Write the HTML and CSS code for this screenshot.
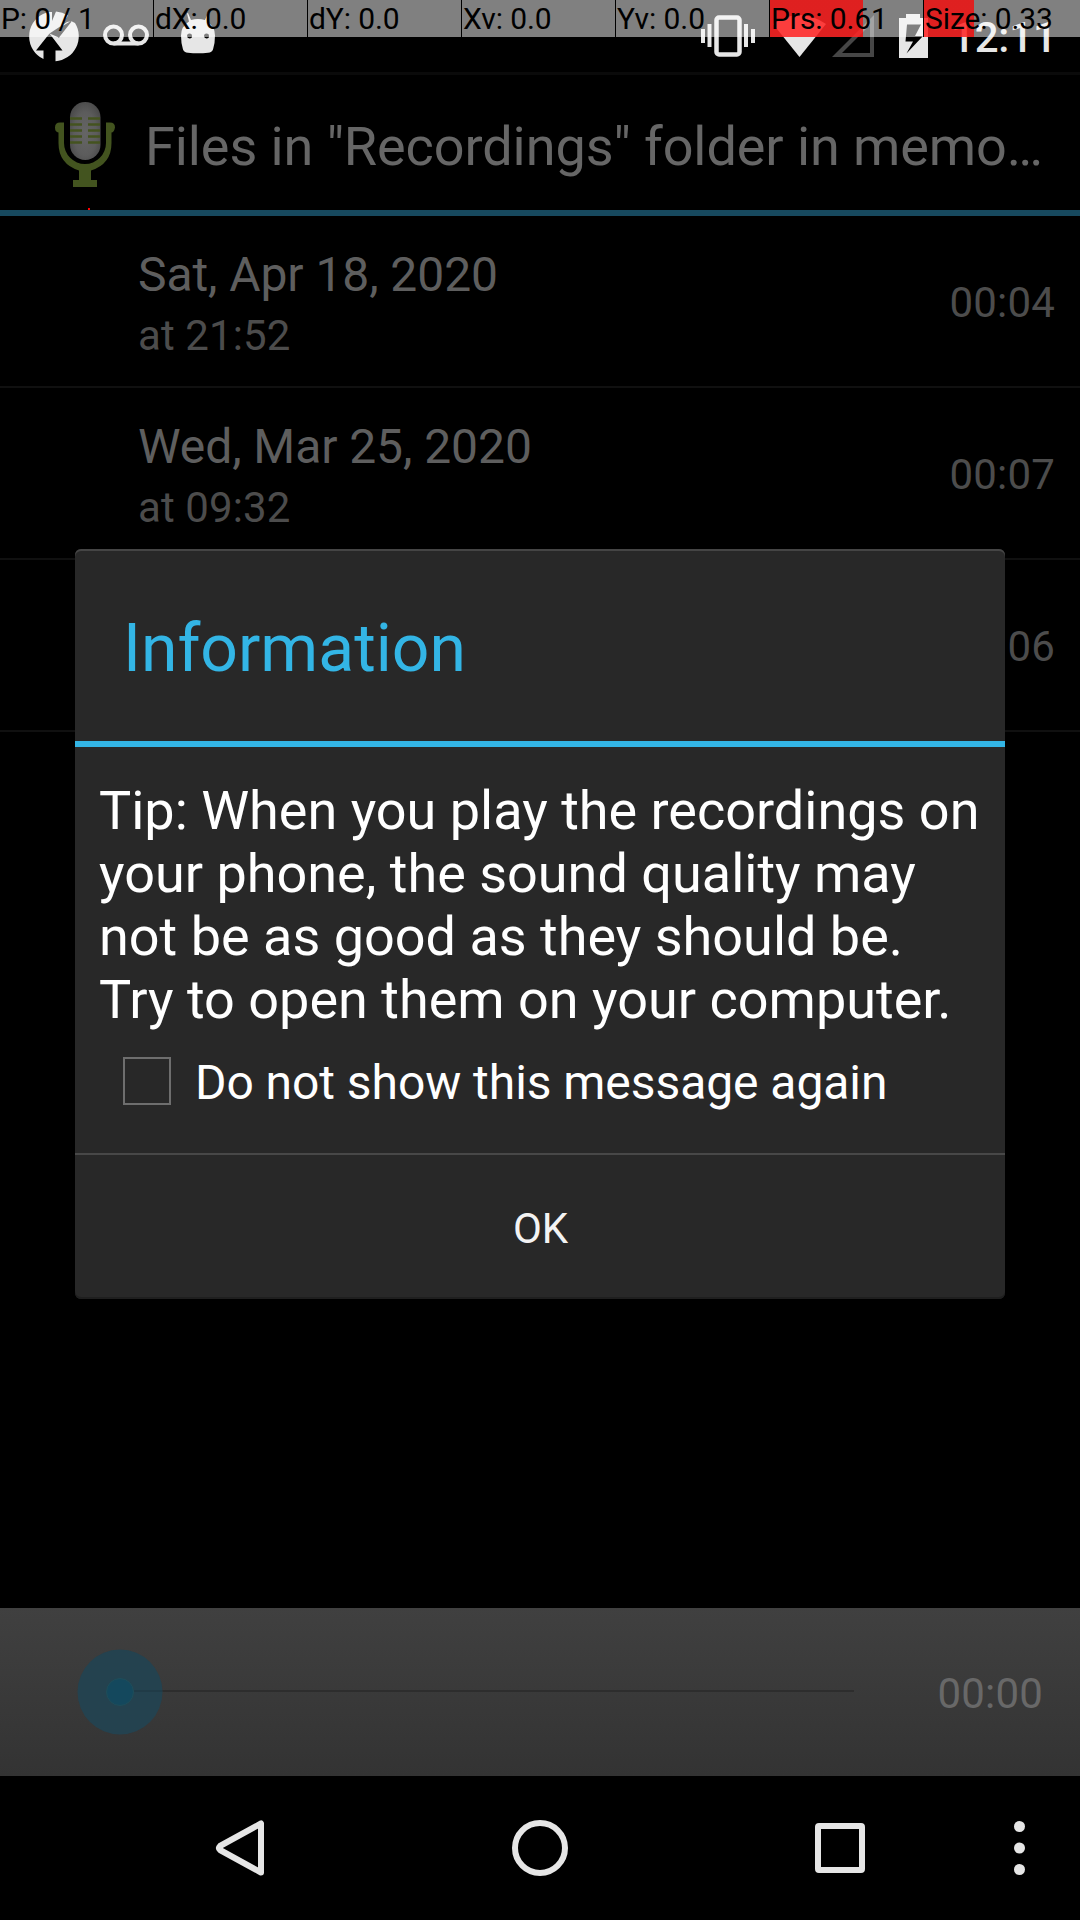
FILE: index.html
```html
<!DOCTYPE html>
<html lang="en">
<head>
<meta charset="utf-8">
<title>Recordings</title>
<link rel="stylesheet" href="styles.css">
</head>
<body>
<div class="screen">
  <header class="status">
    <svg class="status-icons" width="240" height="72" viewBox="0 0 240 72">
      <path class="light" fill-rule="evenodd" d="M56 11.500a25 25 0 0 1 12 4l-8 12 11-6.500 4 2a25 25 0 0 1-19.500 38.200V50.500h7L49.500 33.500 36 50.500h7.500V59A25 25 0 0 1 43 14l5-2h4v9zM49.500 33.500l9.500 4L72 21l-5 1z"/>
      <g class="line" stroke-width="4"><circle cx="113.500" cy="35" r="8.500"/><circle cx="138.500" cy="35" r="8.500"/><path d="M113.500 43.500h25"/></g>
      <path class="light" fill-rule="evenodd" d="M188 13l3 7q7-2 14 0l3-7 1 .5-2 8q8 5 8 14 0 8-2 14-1 3-5 3.200-10 1-20 0-4-.2-5-3.200-2-6-2-14 0-9 8-14l-2-8zM189.500 33.500a2.300 2.300 0 1 0 .1 5 2.300 2.300 0 0 0-.1-5zM206.500 33.500a2.300 2.300 0 1 0 .1 5 2.300 2.300 0 0 0-.1-5z"/>
    </svg>
    <div class="status-right">
      <svg width="240" height="72" viewBox="690 0 240 72">
        <path class="light" d="M701 29h4v14h-4zM707.500 24h4v23h-4zM744 24h4v23h-4zM751 29h4v14h-4z"/>
        <rect class="line" x="716.500" y="17.500" width="23" height="37" rx="2.500" stroke-width="4.500"/>
        <path class="light" d="M773 24Q799.500 6 826 24L799.500 57z"/>
        <path class="dim" fill-rule="evenodd" d="M832 57L874 15V57zM842 53H870V25z"/>
        <path class="light" fill-rule="evenodd" d="M906 14h14v4h8v40h-29V18h7zM907 24.500l-1.500 17h7.500l-6.500 12L923 36h-8l6-11.500z"/>
      </svg>
      <span class="clock">12:11</span>
    </div>
  </header>

  <div class="appbar">
    <svg class="mic" width="64" height="90" viewBox="0 0 64 90">
      <defs><radialGradient id="silver" cx=".5" cy=".55" r=".75"><stop offset="0" stop-color="#656565"/><stop offset=".5" stop-color="#5c5c5c"/><stop offset="1" stop-color="#3c3c3c"/></radialGradient></defs>
      <rect x="16" y="2" width="30.500" height="58" rx="15.250" fill="url(#silver)"/>
      <path d="M16 18.500h12M34 18.500h12M16 24.500h12M34 24.500h12M16 30.500h12M34 30.500h12M16 36.500h12M34 36.500h12M16 42.500h12M34 42.500h12" stroke="#44531f" stroke-width="2.600"/>
      <path d="M1 27.500q0-5 5-5h4V43a21 21 0 0 0 42 0V22.500h4q5 0 5 5-1 5-3.500 5V43q0 21-20.500 27.500V80h6v7H19v-7h6v-9.500Q4.500 64 4.500 43V32.500Q1 32 1 27.500z" fill="#43541f"/>
    </svg>
    <h1 class="title">Files in "Recordings" folder in memo…</h1>
    <i class="touch-dot"></i>
  </div>

  <ul class="list">
    <li class="row"><div class="when"><div class="date">Sat, Apr 18, 2020</div><div class="time">at 21:52</div></div><span class="length">00:04</span></li>
    <li class="row"><div class="when"><div class="date">Wed, Mar 25, 2020</div><div class="time">at 09:32</div></div><span class="length">00:07</span></li>
    <li class="row"><span class="length">00:06</span></li>
  </ul>

  <div class="player">
    <svg width="860" height="168" viewBox="0 0 860 168">
      <path d="M120 83H854" stroke="#2d2d2d" stroke-width="2"/>
      <circle cx="120" cy="84" r="42.500" fill="#24424f"/>
      <circle cx="120" cy="84" r="13.500" fill="#14485d" stroke="#1f4d59" stroke-width="1"/>
      <path d="M134 83H162" stroke="#203b47" stroke-width="2"/>
    </svg>
    <span class="position">00:00</span>
  </div>

  <nav class="nav">
    <svg width="1080" height="144" viewBox="0 1776 1080 144">
      <path class="navline" stroke-linejoin="round" d="M261 1823.500V1872.500L220 1850Q218 1848 220 1846z"/>
      <circle class="navline" cx="540" cy="1848" r="25"/>
      <rect class="navline" x="818" y="1826" width="44" height="44" rx="1"/>
      <g class="navdot"><circle cx="1019.500" cy="1826.500" r="5.500"/><circle cx="1019.500" cy="1848" r="5.500"/><circle cx="1019.500" cy="1869.500" r="5.500"/></g>
    </svg>
  </nav>

  <section class="dialog">
    <h2 class="dialog-title">Information</h2>
    <div class="dialog-body">
      <p class="message">Tip: When you play the recordings on<br>your phone, the sound quality may<br>not be as good as they should be.<br>Try to open them on your computer.</p>
      <div class="check"><span class="box"></span><span class="check-label">Do not show this message again</span></div>
    </div>
    <div class="ok">OK</div>
  </section>

  <div class="pointer">
    <span class="cell">P: 0 / 1</span>
    <span class="cell">dX: 0.0</span>
    <span class="cell">dY: 0.0</span>
    <span class="cell">Xv: 0.0</span>
    <span class="cell">Yv: 0.0</span>
    <span class="cell pressure">Prs: 0.61</span>
    <span class="cell size">Size: 0.33</span>
  </div>
</div>
</body>
</html>
```
FILE: styles.css
```css
* { box-sizing: border-box; margin: 0; padding: 0; }
body { background: #000; font-family: Roboto, "Noto Sans", sans-serif; font-weight: 400; }
h1, h2 { font-weight: 400; }
svg { display: block; flex: none; }
.screen { position: relative; width: 1080px; height: 1920px; display: flex; flex-direction: column; overflow: hidden; background: #000; }

.status { height: 75px; display: flex; justify-content: space-between; border-bottom: 3px solid #0a0a0a; flex: none; }
.status-right { display: flex; width: 390px; }
.light { fill: #e6e6e6; }
.dim { fill: #464646; }
.line { fill: none; stroke: #e6e6e6; }
.clock { padding: 10px 0 0 21px; font-size: 42px; line-height: 56px; font-weight: 500; letter-spacing: -.2px; color: #e6e6e6; }

.appbar { position: relative; height: 141px; display: flex; align-items: center; padding-left: 54px; border-bottom: 6px solid #17495e; flex: none; }
.mic { margin-top: 5px; }
.title { margin: 8px 0 0 27px; font-size: 54px; line-height: 64px; letter-spacing: -.08px; color: #666; white-space: nowrap; }
.touch-dot { position: absolute; left: 88px; bottom: 0; width: 2px; height: 2px; background: #f00; }

.list { list-style: none; flex: 1; }
.row { height: 172px; display: flex; align-items: center; padding: 0 25px 0 138px; border-bottom: 2px solid #101010; }
.when { display: flex; flex-direction: column; gap: 8px; margin-top: 6px; }
.date { font-size: 48px; line-height: 56px; letter-spacing: -.08px; color: #5e5e5e; }
.time { font-size: 42px; line-height: 50px; letter-spacing: .1px; color: #4c4c4c; }
.length { margin: 3px 0 0 auto; font-size: 42px; line-height: 50px; letter-spacing: .2px; color: #4c4c4c; }

.player { height: 168px; display: flex; align-items: center; justify-content: space-between; padding-right: 37px; background: linear-gradient(#404040, #333); flex: none; }
.position { margin-top: 3px; font-size: 42px; line-height: 50px; letter-spacing: .2px; color: #686868; }

.nav { height: 144px; flex: none; }
.navline { fill: none; stroke: #e6e6e6; stroke-width: 6; }
.navdot { fill: #e6e6e6; }

.dialog { position: absolute; left: 75px; top: 549px; width: 930px; height: 750px; display: flex; flex-direction: column; background: #282828; border-radius: 6px; box-shadow: inset 0 2px 0 #454545, inset 0 -2px 0 #1f1f1f; }
.dialog-title { height: 198px; padding: 60px 0 0 48px; font-size: 66px; line-height: 80px; color: #33b5e5; border-bottom: 6px solid #33b5e5; }
.dialog-body { height: 408px; padding: 32px 24px 0; border-bottom: 2px solid #484848; }
.message { font-size: 54px; line-height: 63px; color: #fff; white-space: nowrap; }
.check { display: flex; align-items: center; gap: 24px; padding: 26px 0 0 24px; height: 74px; }
.box { width: 48px; height: 48px; border: 2px solid #6e6e6e; }
.check-label { margin-top: 3px; font-size: 48px; line-height: 48px; letter-spacing: -.06px; color: #fff; white-space: nowrap; }
.ok { flex: 1; display: flex; align-items: center; justify-content: center; padding: 2px 0 0 1px; font-size: 42px; color: #f3f3f3; }

.pointer { position: absolute; left: 0; top: 0; width: 1080px; height: 37px; display: grid; grid-template-columns: repeat(7, 154px); background: rgba(255, 255, 255, .5); overflow: hidden; }
.cell { padding-left: 1px; border-right: 1px solid #000; font-size: 30px; line-height: 37px; letter-spacing: -.1px; color: #000; white-space: nowrap; }
.cell:last-child { border-right: 0; }
.pressure { background: linear-gradient(rgba(255, 0, 0, .75), rgba(255, 0, 0, .75)) no-repeat 0 0 / 93px 37px; }
.size { background: linear-gradient(rgba(255, 0, 0, .75), rgba(255, 0, 0, .75)) no-repeat 0 0 / 50px 37px; }
```
